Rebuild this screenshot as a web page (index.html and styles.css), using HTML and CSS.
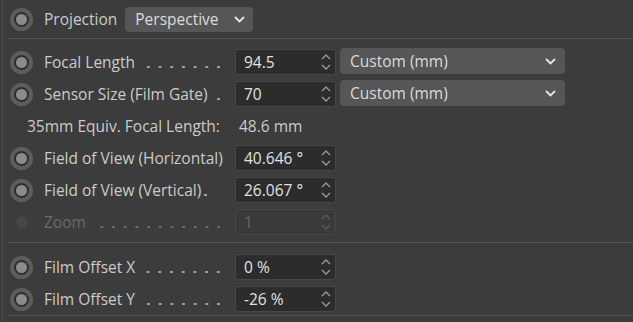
FILE: index.html
```html
<!DOCTYPE html>
<html lang="en">
<head>
<meta charset="UTF-8">
<title>Camera Object</title>
<link rel="stylesheet" href="styles.css">
</head>
<body>
  <div class="panel">
    <div class="row row-top">
      <span class="radio"></span>
      <span class="label-short">Projection</span>
      <div class="dropdown dropdown-small">
        <span>Perspective</span>
        <svg class="chev" width="11" height="7" viewBox="0 0 11 7"><path d="M1 1l4.5 4.5L10 1" fill="none" stroke="#e6e6e6" stroke-width="1.8"/></svg>
      </div>
    </div>

    <div class="group">
      <div class="row">
        <span class="radio"></span>
        <span class="label"><span>Focal Length</span><i class="lead"></i></span>
        <div class="field"><span>94.5</span><svg class="spin" width="10" height="20" viewBox="0 0 10 20"><path d="M1 7l4-4 4 4M1 13l4 4 4-4" fill="none" stroke="#9a9a9a" stroke-width="1.3"/></svg></div>
        <div class="dropdown dropdown-wide">
          <span>Custom (mm)</span>
          <svg class="chev" width="11" height="7" viewBox="0 0 11 7"><path d="M1 1l4.5 4.5L10 1" fill="none" stroke="#e6e6e6" stroke-width="1.8"/></svg>
        </div>
      </div>
      <div class="row">
        <span class="radio"></span>
        <span class="label"><span>Sensor Size (Film Gate)</span><i class="lead"></i></span>
        <div class="field"><span>70</span><svg class="spin" width="10" height="20" viewBox="0 0 10 20"><path d="M1 7l4-4 4 4M1 13l4 4 4-4" fill="none" stroke="#9a9a9a" stroke-width="1.3"/></svg></div>
        <div class="dropdown dropdown-wide">
          <span>Custom (mm)</span>
          <svg class="chev" width="11" height="7" viewBox="0 0 11 7"><path d="M1 1l4.5 4.5L10 1" fill="none" stroke="#e6e6e6" stroke-width="1.8"/></svg>
        </div>
      </div>
      <div class="row">
        <span class="info-label">35mm Equiv. Focal Length:</span>
        <span class="info-value">48.6 mm</span>
      </div>
      <div class="row">
        <span class="radio"></span>
        <span class="label"><span>Field of View (Horizontal)</span></span>
        <div class="field"><span>40.646 °</span><svg class="spin" width="10" height="20" viewBox="0 0 10 20"><path d="M1 7l4-4 4 4M1 13l4 4 4-4" fill="none" stroke="#9a9a9a" stroke-width="1.3"/></svg></div>
      </div>
      <div class="row">
        <span class="radio"></span>
        <span class="label"><span>Field of View (Vertical)</span><i class="lead lead-one"></i></span>
        <div class="field"><span>26.067 °</span><svg class="spin" width="10" height="20" viewBox="0 0 10 20"><path d="M1 7l4-4 4 4M1 13l4 4 4-4" fill="none" stroke="#9a9a9a" stroke-width="1.3"/></svg></div>
      </div>
      <div class="row disabled">
        <span class="radio"></span>
        <span class="label"><span>Zoom</span><i class="lead"></i></span>
        <div class="field"><span>1</span><svg class="spin" width="10" height="20" viewBox="0 0 10 20"><path d="M1 7l4-4 4 4M1 13l4 4 4-4" fill="none" stroke="#5a5a5a" stroke-width="1.3"/></svg></div>
      </div>
    </div>

    <div class="group group-last">
      <div class="row">
        <span class="radio"></span>
        <span class="label"><span>Film Offset X</span><i class="lead"></i></span>
        <div class="field"><span>0 %</span><svg class="spin" width="10" height="20" viewBox="0 0 10 20"><path d="M1 7l4-4 4 4M1 13l4 4 4-4" fill="none" stroke="#9a9a9a" stroke-width="1.3"/></svg></div>
      </div>
      <div class="row">
        <span class="radio"></span>
        <span class="label"><span>Film Offset Y</span><i class="lead"></i></span>
        <div class="field"><span>-26 %</span><svg class="spin" width="10" height="20" viewBox="0 0 10 20"><path d="M1 7l4-4 4 4M1 13l4 4 4-4" fill="none" stroke="#9a9a9a" stroke-width="1.3"/></svg></div>
      </div>
    </div>
  </div>
</body>
</html>
```

FILE: styles.css
```css
html, body {
  margin: 0;
  height: 100%;
}
body {
  background-color: #3c3c3c;
  font-family: "Open Sans", "Noto Sans", sans-serif;
  font-size: 15.5px;
  color: #cbcbcb;
  overflow: hidden;
}
.panel {
  margin-left: 2px;
  border-left: 1px solid #4b4b4b;
  height: 322px;
  box-sizing: border-box;
}
.row {
  display: flex;
  align-items: center;
  height: 32px;
}
.row-top {
  height: 38px;
}
.group {
  margin-left: 5px;
  border-top: 1px solid #555;
  padding-top: 7px;
  padding-bottom: 4px;
}
.group-last {
  padding-top: 8px;
  padding-bottom: 0;
  border-bottom: 1px solid #555;
}
.group .row {
  margin-left: -5px;
}

/* radio button knob */
.radio {
  flex: none;
  width: 23px;
  height: 23px;
  margin-left: 7px;
  margin-right: 11px;
  border-radius: 50%;
  background-color: #5d5d5d;
  display: flex;
  align-items: center;
  justify-content: center;
}
.radio::after {
  content: "";
  width: 11px;
  height: 11px;
  border-radius: 50%;
  border: 2px solid #2f2f2f;
  background-color: #8b8b8b;
}
.disabled .radio {
  background-color: transparent;
}
.disabled .radio::after {
  width: 12px;
  height: 12px;
  border: none;
  background-color: #464646;
}
.disabled {
  color: #6b6b6b;
}

.label-short {
  margin-right: 8px;
}
.label {
  display: flex;
  align-items: baseline;
  width: 190px;
  flex: none;
  white-space: nowrap;
}
/* dotted leader sitting on the text baseline */
.lead {
  flex: 1;
  height: 2px;
  margin: 0 14px 0 6px;
  background-image: linear-gradient(to left, #a0a0a0 3px, transparent 3px);
  background-size: 11.7px 2px;
  background-position: right top;
  background-repeat: repeat-x;
}
.lead-one {
  flex: none;
  width: 3px;
  margin-left: 3px;
}
.disabled .lead {
  background-image: linear-gradient(to left, #6a6a6a 3px, transparent 3px);
}

.info-label {
  margin-left: 24px;
  width: 212px;
}
.info-value {
  color: #cbcbcb;
}

.field {
  flex: none;
  box-sizing: border-box;
  width: 101px;
  height: 26px;
  margin-left: 1px;
  border: 1px solid #474747;
  border-radius: 3px;
  background-color: #2c2c2c;
  color: #e2e2e2;
  display: flex;
  align-items: center;
  justify-content: space-between;
  padding: 0 4px 0 8px;
}
.disabled .field {
  background-color: #3a3a3a;
  color: #666;
}

.dropdown {
  box-sizing: border-box;
  height: 26px;
  border-radius: 4px;
  background-color: #565656;
  color: #dcdcdc;
  display: flex;
  align-items: center;
  justify-content: space-between;
  padding: 0 8px 0 10px;
}
.dropdown-small {
  width: 128px;
  height: 25px;
}
.dropdown-wide {
  width: 225px;
  margin-left: 4px;
  margin-top: -2px;
  padding-right: 9px;
}
```
